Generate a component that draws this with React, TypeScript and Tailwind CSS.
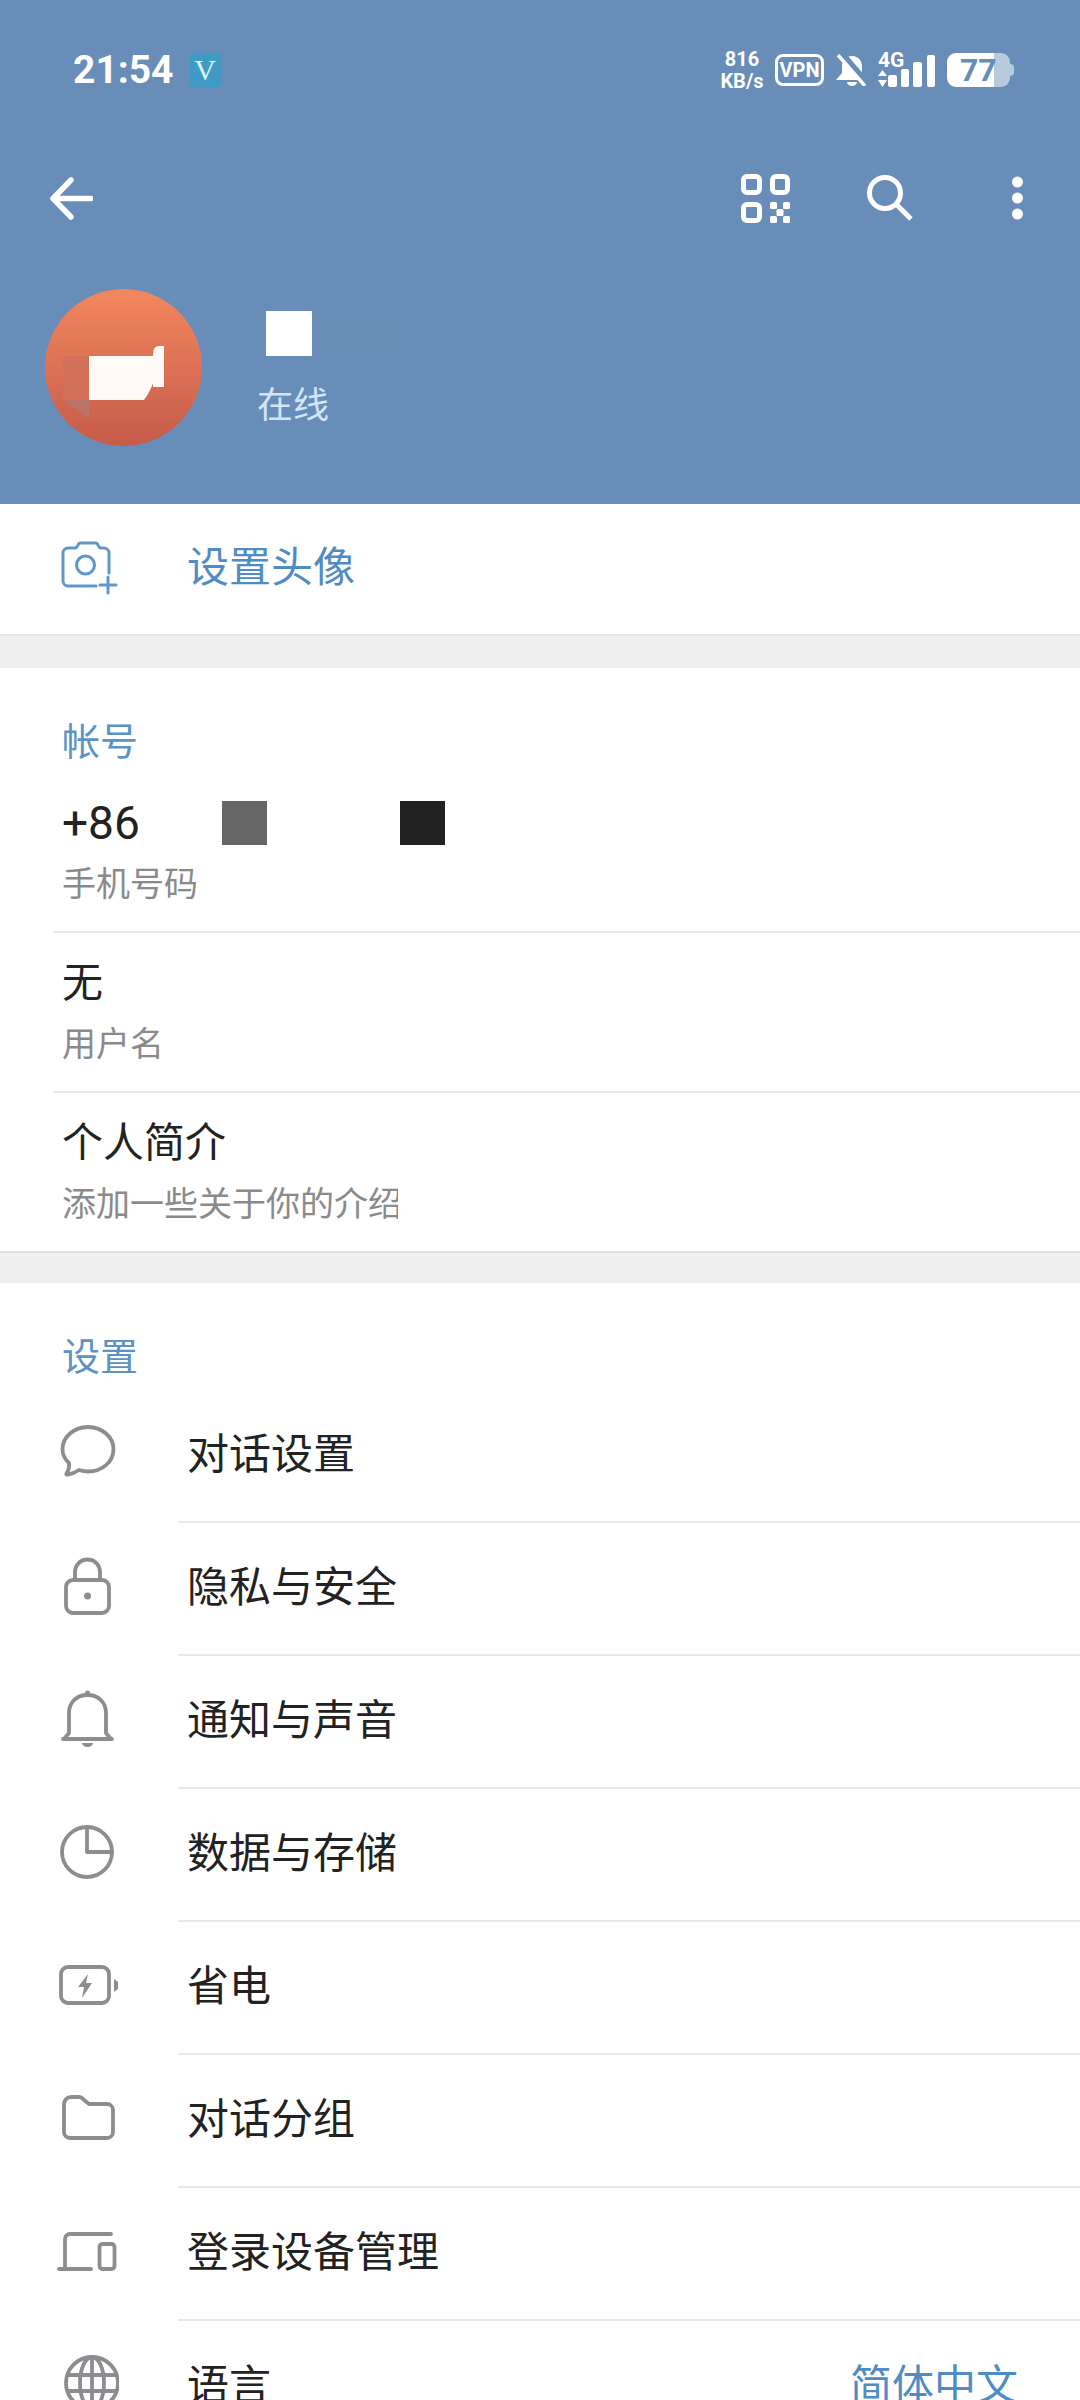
import type { ReactNode } from "react";

const ICON = "#8b8d90";

const Icon = ({ children }: { children: ReactNode }) => (
  <svg width="64" height="64" viewBox="0 0 64 64" fill="none" stroke={ICON} strokeWidth="3.8" strokeLinecap="round" strokeLinejoin="round">
    {children}
  </svg>
);

const menu: { label: string; value?: string; icon: ReactNode }[] = [
  {
    label: "对话设置",
    icon: (
      <path d="M33 6C19 6 7.5 16 7.5 28C7.5 33.5 10 38.5 14 42C14.5 46 13.5 49.5 11.5 52.5C11 53.5 12 54 13 53.5C17 53 21 51 24 49C27 50 30 50.5 33 50.5C47 50.5 58.5 41 58.5 28C58.5 16 47 6 33 6Z" />
    ),
  },
  {
    label: "隐私与安全",
    icon: (
      <>
        <rect x="11" y="26" width="43" height="33" rx="7" />
        <path d="M20 26V18a12.5 12.5 0 0 1 25 0v8" />
        <circle cx="32.5" cy="42" r="3.5" fill={ICON} stroke="none" />
      </>
    ),
  },
  {
    label: "通知与声音",
    icon: (
      <>
        <path d="M8 52H57M9 52L14 46V26C14 15 22 8 32.5 8C43 8 51 15 51 26V46L56 52" />
        <circle cx="32.5" cy="6" r="2.5" fill={ICON} stroke="none" />
        <path d="M27 56H38A5.5 4 0 0 1 27 56Z" fill={ICON} stroke="none" />
      </>
    ),
  },
  {
    label: "数据与存储",
    icon: (
      <>
        <circle cx="32" cy="32" r="25" />
        <path d="M32 7V32H57" />
      </>
    ),
  },
  {
    label: "省电",
    icon: (
      <>
        <rect x="6" y="14" width="48" height="36" rx="7" />
        <path d="M59 26L63 29V36L59 39Z" fill={ICON} stroke="none" />
        <path d="M33 21L23 34H29L27 45L37 30H31Z" fill={ICON} stroke="none" />
      </>
    ),
  },
  {
    label: "对话分组",
    icon: (
      <path d="M9 18a7 7 0 0 1 7-7h8a5 5 0 0 1 4 2l6 5H52a6 6 0 0 1 6 6V46a6 6 0 0 1-6 6H15a6 6 0 0 1-6-6Z" />
    ),
  },
  {
    label: "登录设备管理",
    icon: (
      <>
        <path d="M56 15H15a5 5 0 0 0-5 5V50M4 50H36" />
        <rect x="44.5" y="25" width="15" height="25" rx="3" />
      </>
    ),
  },
  {
    label: "语言",
    value: "简体中文",
    icon: (
      <>
        <circle cx="37" cy="31" r="26" />
        <ellipse cx="37" cy="31" rx="12" ry="26" />
        <path d="M37 5V57M13 23H61M13 39H61" />
      </>
    ),
  },
];

const StatusRight = () => (
  <div className="ml-auto flex items-center pr-[66px] text-white">
    <div className="flex flex-col items-center w-[44px] text-[20px] leading-[22px] font-bold">
      <span>816</span>
      <span>KB/s</span>
    </div>

    <div className="ml-[11px] flex items-center justify-center w-[49px] h-[32px] rounded-[8px] border-[3px] border-white text-[20px] leading-none font-bold">
      VPN
    </div>

    {/* muted bell */}
    <svg className="ml-[11px]" width="34" height="32" viewBox="0 0 34 32" fill="none">
      <path d="M17 2C10 2 7 7 7 13V19L1 26H33L27 19V13C27 7 24 2 17 2Z" fill="white" />
      <path d="M12 28a5 4 0 0 0 10 0Z" fill="white" />
      <path d="M5 -2L34 32" stroke="#688db8" strokeWidth="7" />
      <path d="M3 1L30 32" stroke="white" strokeWidth="3.5" />
    </svg>

    {/* signal with 4G over it */}
    <div className="relative ml-[9px] w-[58px] h-[36px]">
      <svg width="58" height="36" viewBox="0 0 58 36" fill="white">
        <path d="M4.5 18L0 24H9ZM0 28H9L4.5 35Z" />
        <rect x="10" y="23" width="9" height="12" rx="2" />
        <rect x="23" y="17" width="8" height="18" rx="2" />
        <rect x="35" y="10" width="9" height="25" rx="2" />
        <rect x="49" y="3" width="8" height="32" rx="2" />
      </svg>
      <span className="absolute left-0 -top-[2px] text-[21px] leading-[20px] font-bold">4G</span>
    </div>

    {/* battery */}
    <div className="ml-[11px] flex items-center">
      <div className="flex items-center w-[63px] h-[34px] pl-[13px] rounded-[9px] bg-[linear-gradient(90deg,#ffffff_75%,#b9c9dc_75%)] text-[32px] leading-none font-bold text-[#688db8]">
        77
      </div>
      <div className="w-[4px] h-[12px] rounded-r-full bg-[#b9c9dc]" />
    </div>
  </div>
);

const Avatar = () => (
  <svg width="157" height="157" viewBox="0 0 157 157">
    <defs>
      <linearGradient id="av" x1="0" y1="0" x2="0" y2="1">
        <stop offset="0" stopColor="#f3875f" />
        <stop offset="1" stopColor="#c55b4a" />
      </linearGradient>
    </defs>
    <circle cx="78.5" cy="78.5" r="78.5" fill="url(#av)" />
    <rect x="18" y="67" width="28" height="44" fill="#d2705a" />
    <path d="M20 111H44V130Z" fill="#b87568" />
    <path d="M44 67H110V88Q106 102 99 111H44Z" fill="#fffaf5" />
    <path d="M108 66Q108 57 114 57H119V98H108Z" fill="#fffaf5" />
  </svg>
);

const AccountRow = ({ title, sub, last }: { title: ReactNode; sub: ReactNode; last?: boolean }) => (
  <div className={`pt-[25px] pl-[9px] ${last ? "h-[159px]" : "h-[160px] border-b-2 border-[#e8e8e8]"}`}>
    <div className="h-[50px] flex items-center text-[41px] leading-[50px] text-[#222222]">{title}</div>
    <div className="mt-[14px] h-[44px] flex items-center text-[34px] leading-[44px] text-[#8a8a8a]">{sub}</div>
  </div>
);

export default function App() {
  return (
    <div className="w-[1080px] h-[2400px] overflow-hidden bg-white font-['Roboto','Noto_Sans_CJK_SC',sans-serif]">
      {/* blue header */}
      <header className="h-[504px] bg-[#688db8]">
        <div className="h-[140px] flex items-center text-white">
          <span className="ml-[73px] text-[39px] leading-none font-bold">21:54</span>
          <span className="ml-[15px] flex items-center justify-center w-[33px] h-[34px] rounded-[6px] bg-[#3f9bc5] font-['Liberation_Serif',serif] text-[30px] leading-none text-[#dff3fb]">
            V
          </span>
          <StatusRight />
        </div>

        <div className="h-[116px] flex items-center pl-[50px] pr-[57px]">
          <svg width="43" height="43" viewBox="0 0 43 43" fill="none" stroke="white" strokeWidth="5.5" strokeLinecap="round" strokeLinejoin="round">
            <path d="M3 21.5H41M21 3L3 21.5L21 40" />
          </svg>
          <svg className="ml-auto" width="49" height="49" viewBox="0 0 49 49" fill="none" stroke="white" strokeWidth="5">
            <rect x="2.5" y="2.5" width="16" height="16" rx="3.5" />
            <rect x="31.5" y="2.5" width="15" height="16" rx="3.5" />
            <rect x="2.5" y="30.5" width="16" height="16" rx="3.5" />
            <g fill="white" stroke="none">
              <rect x="29" y="28" width="7" height="7" rx="1.5" />
              <rect x="42" y="28" width="7" height="7" rx="1.5" />
              <rect x="35.5" y="35" width="7" height="7" rx="1.5" />
              <rect x="29" y="42" width="7" height="7" rx="1.5" />
              <rect x="42" y="42" width="7" height="7" rx="1.5" />
            </g>
          </svg>
          <svg className="ml-[75px]" width="50" height="50" viewBox="0 0 50 50" fill="none" stroke="white" strokeWidth="5">
            <circle cx="20" cy="20" r="15.5" />
            <path d="M31 31L46 46" />
          </svg>
          <svg className="ml-[97px]" width="11" height="45" viewBox="0 0 11 45" fill="white">
            <circle cx="5.5" cy="6" r="5.5" />
            <circle cx="5.5" cy="22" r="5.5" />
            <circle cx="5.5" cy="38" r="5.5" />
          </svg>
        </div>

        <div className="mt-[33px] flex pl-[45px]">
          <Avatar />
          <div className="ml-[55px] pt-[22px]">
            <div className="flex">
              <div className="ml-[9px] w-[46px] h-[45px] bg-white" />
              <div className="w-[88px] h-[45px] bg-[#678cb6]" />
            </div>
            <div className="mt-[30px] text-[36px] leading-[40px] text-[#d3e6f7]">在线</div>
          </div>
        </div>
      </header>

      {/* set avatar */}
      <div className="h-[132px] flex items-center border-b-2 border-[#e4e4e4] pb-[2px]">
        <svg className="ml-[58px]" width="60" height="60" viewBox="0 0 60 60" fill="none" stroke="#5d97cb" strokeWidth="3" strokeLinecap="round" strokeLinejoin="round">
          <path d="M51 35V15a5 5 0 0 0-5-5h-4l-2-3a3 3 0 0 0-3-2H23a3 3 0 0 0-3 2l-2 3H10a5 5 0 0 0-5 5V43a5 5 0 0 0 5 5H38" />
          <circle cx="27.5" cy="27" r="9" />
          <path d="M50 39V55M42 47H58" />
        </svg>
        <span className="ml-[69px] text-[42px] leading-[50px] text-[#4f8cc3]">设置头像</span>
      </div>
      <div className="h-[32px] bg-[#efefef]" />

      {/* account */}
      <section className="pl-[53px] h-[585px] border-b-2 border-[#e0e0e0]">
        <div className="pt-[52px] pl-[9px] h-[105px] text-[38px] leading-[44px] text-[#5a93c4]">帐号</div>
        <AccountRow
          title={
            <div className="flex items-center">
              <span className="w-[160px] text-[46px]">+86</span>
              <div className="w-[45px] h-[44px] bg-[#666666]" />
              <div className="ml-[133px] w-[45px] h-[44px] bg-[#222222]" />
            </div>
          }
          sub="手机号码"
        />
        <AccountRow title="无" sub="用户名" />
        <AccountRow
          last
          title="个人简介"
          sub={<div className="w-[336px] overflow-hidden whitespace-nowrap">添加一些关于你的介绍</div>}
        />
      </section>
      <div className="h-[30px] bg-[#efefef]" />

      {/* settings */}
      <div className="h-[107px] pt-[52px] pl-[62px] text-[38px] leading-[44px] text-[#5a93c4]">设置</div>
      {menu.map((item) => (
        <div key={item.label} className="h-[133px] flex">
          <div className="w-[178px] shrink-0 flex items-center pl-[55px] pb-[8px]">
            <Icon>{item.icon}</Icon>
          </div>
          <div className="flex-1 flex items-center justify-between pl-[9px] pr-[62px] pb-[2px] border-b-2 border-[#e8e8e8] text-[42px] leading-[50px] text-[#222222]">
            <span>{item.label}</span>
            {item.value && <span className="text-[#4f8cc3]">{item.value}</span>}
          </div>
        </div>
      ))}
    </div>
  );
}
